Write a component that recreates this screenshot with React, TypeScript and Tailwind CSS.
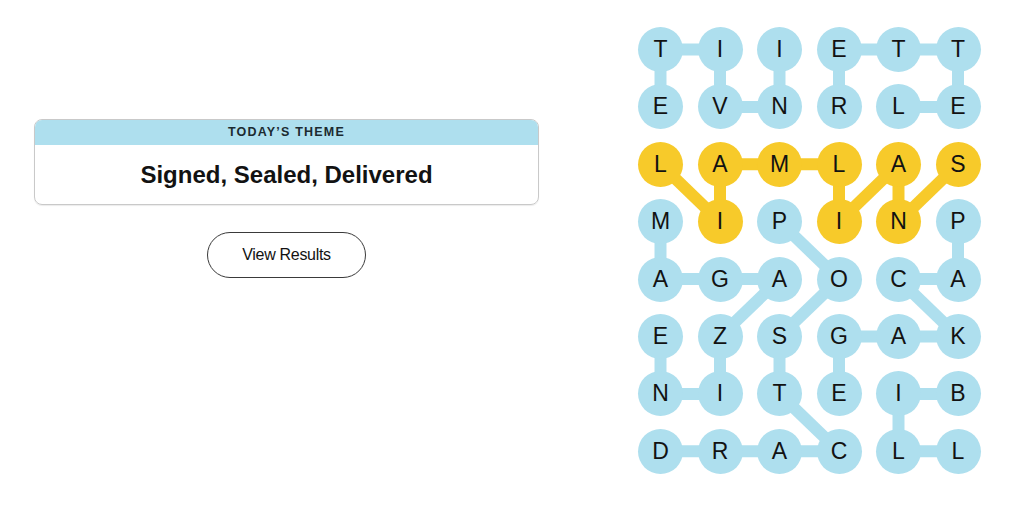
import React from "react";

const letters = ["TIIETT", "EVNRLE", "LAMLAS", "MIPINP", "AGAOCA", "EZSGAK", "NITEIB", "DRACLL"];

const yellowCells = new Set(["2-0", "2-1", "2-2", "2-3", "2-4", "2-5", "3-1", "3-3", "3-4"]);

type Edge = [number, number, number, number];

const blueEdges: Edge[] = [
  // INVITE
  [1, 0, 0, 0], [0, 0, 0, 1], [0, 1, 1, 1], [1, 1, 1, 2], [1, 2, 0, 2],
  // LETTER
  [1, 4, 1, 5], [1, 5, 0, 5], [0, 5, 0, 4], [0, 4, 0, 3], [0, 3, 1, 3],
  // MAGAZINE
  [3, 0, 4, 0], [4, 0, 4, 1], [4, 1, 4, 2], [4, 2, 5, 1], [5, 1, 6, 1], [6, 1, 6, 0], [6, 0, 5, 0],
  // POSTCARD
  [3, 2, 4, 3], [4, 3, 5, 2], [5, 2, 6, 2], [6, 2, 7, 3], [7, 3, 7, 2], [7, 2, 7, 1], [7, 1, 7, 0],
  // PACKAGE
  [3, 5, 4, 5], [4, 5, 4, 4], [4, 4, 5, 5], [5, 5, 5, 4], [5, 4, 5, 3], [5, 3, 6, 3],
  // BILL
  [6, 5, 6, 4], [6, 4, 7, 4], [7, 4, 7, 5],
];

const yellowEdges: Edge[] = [
  [2, 0, 3, 1], [3, 1, 2, 1], [2, 1, 2, 2], [2, 2, 2, 3], [2, 3, 3, 3], [3, 3, 2, 4], [2, 4, 3, 4], [3, 4, 2, 5],
];

const DX = 59.5;
const DY = 57.4;
const R = 22.5;
const cx = (c: number) => R + c * DX;
const cy = (r: number) => R + r * DY;

function Board() {
  return (
    <div className="relative w-[343px] h-[447px]">
      <svg className="absolute inset-0" width={343} height={447} viewBox="0 0 343 447">
        {blueEdges.map(([r1, c1, r2, c2], i) => (
          <line key={"b" + i} x1={cx(c1)} y1={cy(r1)} x2={cx(c2)} y2={cy(r2)} stroke="#aedfee" strokeWidth={12} />
        ))}
        {yellowEdges.map(([r1, c1, r2, c2], i) => (
          <line key={"y" + i} x1={cx(c1)} y1={cy(r1)} x2={cx(c2)} y2={cy(r2)} stroke="#f7ca2a" strokeWidth={12} />
        ))}
      </svg>
      <div className="relative grid grid-cols-[repeat(6,45px)] grid-rows-[repeat(8,45px)] gap-x-[14.5px] gap-y-[12.4px]">
        {letters.map((row, r) =>
          row.split("").map((ch, c) => {
            const yellow = yellowCells.has(`${r}-${c}`);
            return (
              <div
                key={`${r}-${c}`}
                className={
                  "w-[45px] h-[45px] rounded-full flex items-center justify-center text-[23px] leading-none text-[#121212] " +
                  (yellow ? "bg-[#f7ca2a]" : "bg-[#aedfee]")
                }
              >
                {ch}
              </div>
            );
          })
        )}
      </div>
    </div>
  );
}

export default function App() {
  return (
    <div className="w-[1024px] h-[522px] bg-white flex font-['Liberation_Sans',Arial,sans-serif]">
      <div className="ml-[34px] mt-[119px] w-[505px] flex flex-col items-center">
        <div className="w-full border border-[#c9c9c9] rounded-[8px] overflow-hidden shadow-[0_1px_1px_rgba(0,0,0,0.08)]">
          <div className="h-[25px] bg-[#aedfee] flex items-center justify-center text-[12.5px] font-bold tracking-[1.2px] text-[#1c2a30] uppercase">
            Today’s Theme
          </div>
          <div className="h-[59px] flex items-center justify-center text-[24px] font-bold text-[#121212]">
            Signed, Sealed, Delivered
          </div>
        </div>
        <button className="mt-[27px] w-[159px] h-[46px] rounded-full border border-[#3a3a3a] bg-white flex items-center justify-center text-[16px] text-[#121212] tracking-[-0.3px]">
          View Results
        </button>
      </div>
      <div className="ml-[99px] mt-[27px]">
        <Board />
      </div>
    </div>
  );
}
